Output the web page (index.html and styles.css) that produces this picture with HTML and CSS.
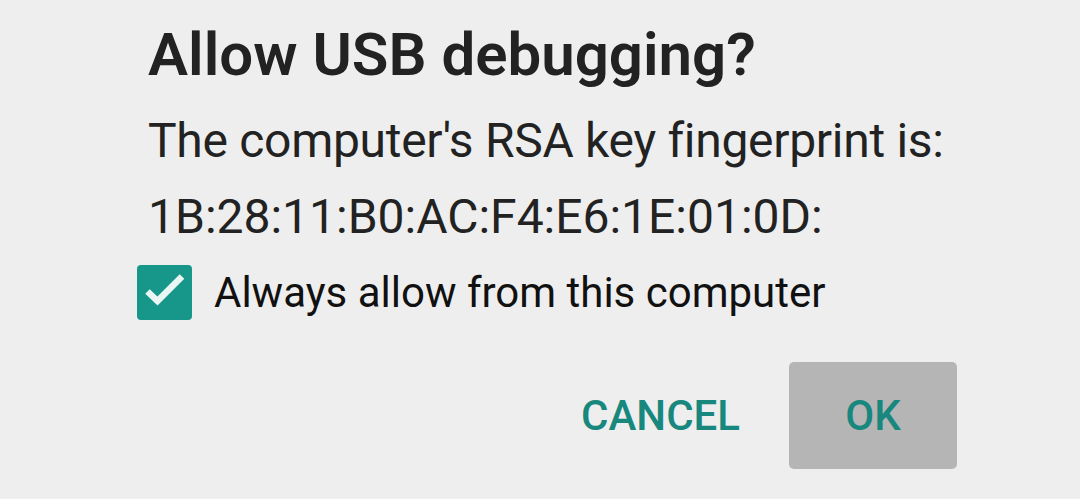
FILE: index.html
```html
<!DOCTYPE html>
<html>
<head>
<meta charset="utf-8">
<link rel="stylesheet" href="styles.css">
</head>
<body>
<div class="dialog">
  <h1 class="title">Allow USB debugging?</h1>
  <p class="line">The computer's RSA key fingerprint is:</p>
  <p class="line">1B:28:11:B0:AC:F4:E6:1E:01:0D:</p>
  <label class="check-row">
    <span class="checkbox">
      <svg width="55" height="55" viewBox="0 0 55 55"><path d="M10.5 26.5 L20.5 36 L45 11.5" fill="none" stroke="#eaf6f4" stroke-width="6.5"/></svg>
    </span>
    <span class="check-label">Always allow from this computer</span>
  </label>
  <div class="actions">
    <button class="btn cancel">CANCEL</button>
    <button class="btn ok">OK</button>
  </div>
</div>
</body>
</html>
```

FILE: styles.css
```css
html, body {
  margin: 0;
  padding: 0;
  background: #eeeeee;
}
body {
  font-family: Roboto, "Noto Sans", sans-serif;
  color: #212121;
  width: 1080px;
  height: 499px;
  overflow: hidden;
}
.dialog {
  padding: 18px 123px 0 148px;
}
.title {
  margin: 0;
  font-size: 60px;
  line-height: 74px;
  font-weight: 600;
  color: #222222;
  white-space: nowrap;
}
.line {
  margin: 0;
  font-size: 48px;
  line-height: 76px;
  font-weight: 400;
  color: #222222;
  white-space: nowrap;
}
.line-first {
  letter-spacing: -0.3px;
}
.title + .line {
  margin-top: 11px;
  letter-spacing: -0.3px;
}
.check-row {
  display: flex;
  align-items: center;
  margin-top: 10px;
  margin-left: -11px;
  gap: 22px;
}
.checkbox {
  width: 55px;
  height: 55px;
  border-radius: 4px;
  background: #17968a;
  display: block;
}
.checkbox svg {
  display: block;
}
.check-label {
  font-size: 42px;
  line-height: 55px;
  color: #111111;
  white-space: nowrap;
}
.actions {
  display: flex;
  justify-content: flex-end;
  align-items: center;
  gap: 25px;
  margin-top: 42px;
}
.btn {
  font-family: Roboto, "Noto Sans", sans-serif;
  font-size: 42px;
  font-weight: 500;
  color: #18877d;
  border: none;
  background: transparent;
  height: 107px;
  padding: 0 24px;
}
.ok {
  background: #b5b5b5;
  width: 168px;
  border-radius: 5px;
}
```
